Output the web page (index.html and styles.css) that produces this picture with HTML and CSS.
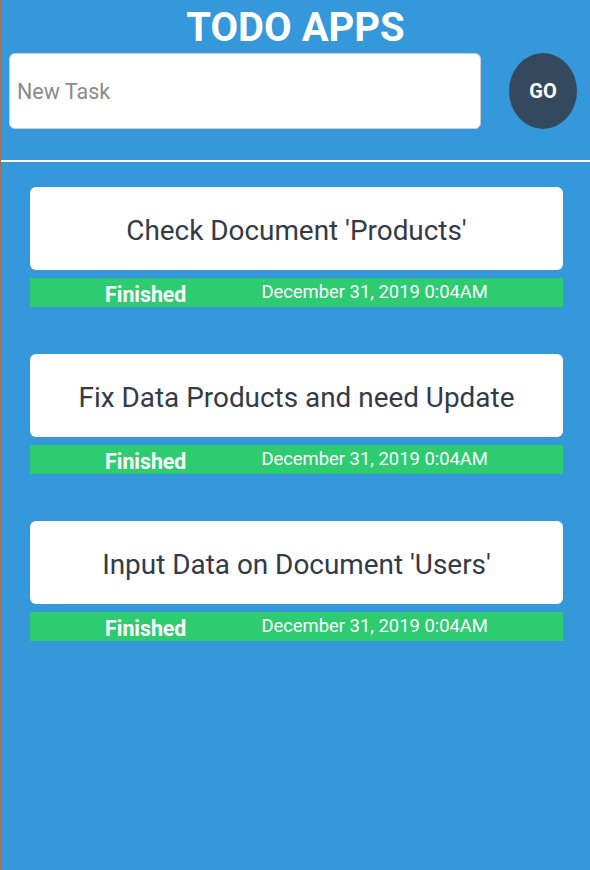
FILE: index.html
```html
<!DOCTYPE html>
<html>
<head>
<meta charset="utf-8">
<link rel="stylesheet" href="styles.css">
</head>
<body>
<div class="app">
  <h1 class="title">TODO APPS</h1>
  <form class="new-form">
    <input class="task-input" type="text" placeholder="New Task">
    <button class="go-btn" type="button">GO</button>
  </form>
  <hr class="divider">
  <ul class="list">
    <li class="item">
      <div class="card">Check Document 'Products'</div>
      <div class="status"><span class="state">Finished</span><span class="date">December 31, 2019 0:04AM</span></div>
    </li>
    <li class="item">
      <div class="card">Fix Data Products and need Update</div>
      <div class="status"><span class="state">Finished</span><span class="date">December 31, 2019 0:04AM</span></div>
    </li>
    <li class="item">
      <div class="card">Input Data on Document 'Users'</div>
      <div class="status"><span class="state">Finished</span><span class="date">December 31, 2019 0:04AM</span></div>
    </li>
  </ul>
</div>
</body>
</html>
```

FILE: styles.css
```css
html, body {
  margin: 0;
  padding: 0;
  height: 100%;
}
body {
  background: #3498db;
  font-family: Roboto, "Liberation Sans", sans-serif;
}
.app {
  min-height: 870px;
  border-left: 1px solid #a0705f;
  box-sizing: border-box;
}
.title {
  margin: 0;
  padding-top: 4px;
  font-size: 40px;
  line-height: 48px;
  font-weight: 700;
  color: #fff;
  text-align: center;
}
.new-form {
  display: flex;
  align-items: center;
  gap: 28px;
  padding: 1px 13px 0 8px;
  margin: 0;
}
.task-input {
  flex: 1;
  height: 76px;
  box-sizing: border-box;
  border: 1px solid #c9ccd1;
  border-radius: 6px;
  padding: 0 7px;
  font-family: Roboto, "Liberation Sans", sans-serif;
  font-size: 21.5px;
  color: #333;
  background: #fff;
  outline: none;
}
.task-input::placeholder {
  color: #8a8a8a;
}
.go-btn {
  width: 68px;
  height: 76px;
  border: none;
  border-radius: 50%;
  background: #34495e;
  color: #fff;
  font-family: Roboto, "Liberation Sans", sans-serif;
  font-size: 20px;
  font-weight: 700;
  padding: 0;
}
.divider {
  margin: 31px 0 0 0;
  border: none;
  height: 2px;
  background: #fff;
}
.list {
  list-style: none;
  margin: 25px 27px 0 29px;
  padding: 0;
  display: flex;
  flex-direction: column;
  gap: 47px;
}
.item {
  display: flex;
  flex-direction: column;
  gap: 8px;
}
.card {
  height: 83px;
  box-sizing: border-box;
  padding-top: 3px;
  background: #fff;
  border-radius: 6px;
  display: flex;
  align-items: center;
  justify-content: center;
  font-size: 27.9px;
  color: #333a48;
}
.status {
  height: 29px;
  background: #2ecc71;
  display: flex;
  align-items: center;
  justify-content: space-evenly;
  color: #fff;
}
.state {
  font-size: 21.3px;
  font-weight: 700;
  padding-top: 4px;
}
.date {
  font-size: 18.4px;
  padding-bottom: 2px;
}
```
